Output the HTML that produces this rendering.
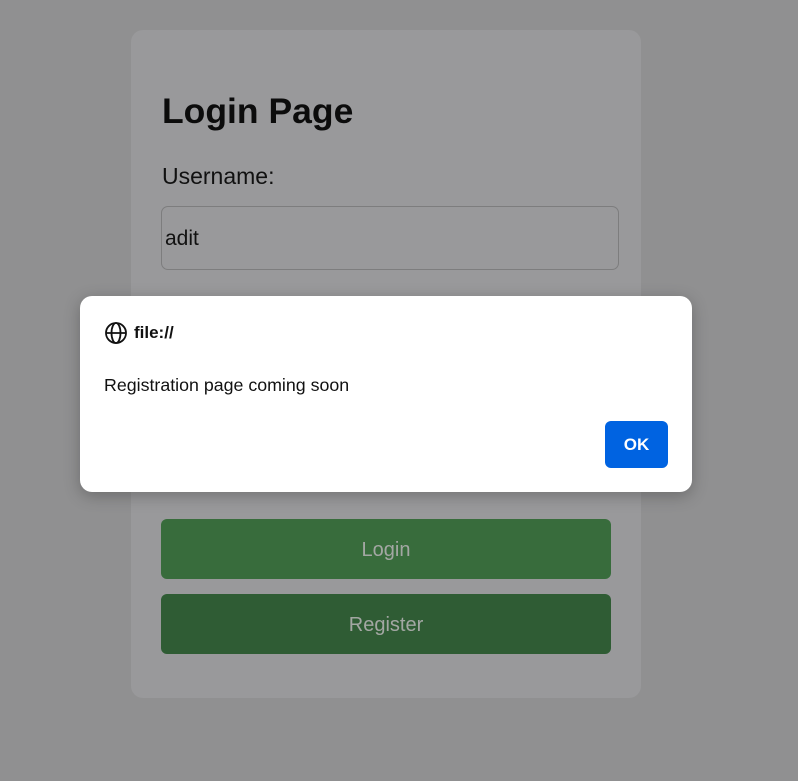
<!DOCTYPE html>
<html><head><meta charset="utf-8"><style>
html,body{margin:0;padding:0;width:798px;height:781px;background:#909091;overflow:hidden;font-family:"Liberation Sans",sans-serif;}
.card{position:absolute;left:131px;top:30px;width:510px;height:668px;background:#99999b;border-radius:12px;}
h1{position:absolute;left:162px;top:91px;margin:0;font-size:35.5px;font-weight:bold;color:#0c0c0c;}
.lbl{position:absolute;left:162px;top:163px;font-size:23px;color:#111;}
.inp{position:absolute;left:161px;top:206px;width:458px;height:64px;border:1px solid #7d7d7e;border-radius:7px;box-sizing:border-box;}
.inp span{position:absolute;left:3px;top:20px;font-size:21px;color:#111;}
.btn{position:absolute;left:161px;width:450px;height:60px;border-radius:6px;color:#a3a7a3;font-size:20px;text-align:center;line-height:62px;}
.b1{top:519px;background:#386c3c;}
.b2{top:594px;background:#2f5c34;}
.dlg{position:absolute;left:80px;top:296px;width:612px;height:196px;background:#fff;border-radius:12px;box-shadow:0 4px 16px rgba(0,0,0,.25);}
.ttl{position:absolute;left:24px;top:25px;font-size:17px;color:#111;display:flex;align-items:center;gap:6px;font-weight:600;}
.msg{position:absolute;left:24px;top:79px;font-size:17.8px;color:#111;}
.ok{position:absolute;left:525px;top:125px;width:63px;height:47px;background:#0063e1;border-radius:6px;color:#fff;font-size:17px;font-weight:bold;text-align:center;line-height:47px;}
</style></head><body>
<div class="card"></div>
<h1>Login Page</h1>
<div class="lbl">Username:</div>
<div class="inp"><span>adit</span></div>
<div class="btn b1">Login</div>
<div class="btn b2">Register</div>
<div class="dlg">
<div class="ttl"><svg width="24" height="24" viewBox="0 0 24 24" fill="none" stroke="#111" stroke-width="1.8"><circle cx="12" cy="12" r="10"/><ellipse cx="12" cy="12" rx="4.5" ry="10"/><line x1="2" y1="12" x2="22" y2="12"/></svg><span>file://</span></div>
<div class="msg">Registration page coming soon</div>
<div class="ok">OK</div>
</div>
</body></html>
